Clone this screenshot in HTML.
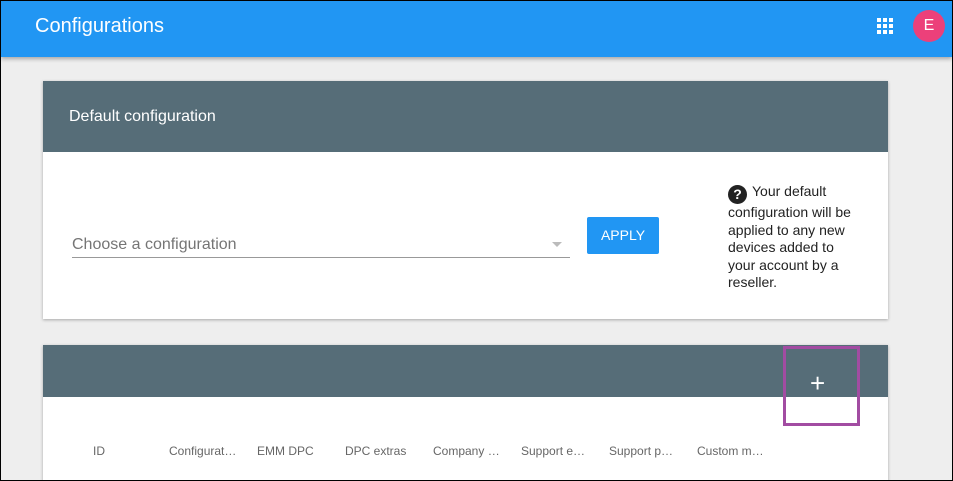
<!DOCTYPE html>
<html><head><style>
*{margin:0;padding:0;box-sizing:border-box}
body{width:953px;height:481px;overflow:hidden;background:#fff;font-family:"Liberation Sans",sans-serif}
#frame{position:absolute;left:0;top:0;width:953px;height:481px;border:1px solid #000;background:#eeeeee;overflow:hidden}
.top{position:absolute;left:0;top:0;width:951px;height:56px;background:#2196f3;box-shadow:0 2px 4px rgba(0,0,0,.3)}
.top h1{position:absolute;left:34px;top:14px;font-size:20px;font-weight:normal;color:#fff}
.grid{position:absolute;left:876px;top:17px;width:16px;height:16px}
.grid i{position:absolute;width:4px;height:4px;background:#fff}
.av{position:absolute;left:912px;top:9px;width:32px;height:32px;border-radius:50%;background:#ec407a;color:#fff;font-size:16px;text-align:center;line-height:32px}
.card{position:absolute;left:42px;width:845px;background:#fff;box-shadow:0 1px 3px rgba(0,0,0,.3)}
.hd{background:#566d78;color:#fff}
</style></head><body><div id="frame">
<div class="top"><h1>Configurations</h1>
<div class="grid">
<i style="left:0;top:0"></i><i style="left:6px;top:0"></i><i style="left:12px;top:0"></i>
<i style="left:0;top:6px"></i><i style="left:6px;top:6px"></i><i style="left:12px;top:6px"></i>
<i style="left:0;top:12px"></i><i style="left:6px;top:12px"></i><i style="left:12px;top:12px"></i>
</div>
<div class="av">E</div></div>

<div class="card" style="top:80px;height:238px">
<div class="hd" style="height:71px;padding:27px 0 0 26px;font-size:16px">Default configuration</div>
<div style="position:absolute;left:29px;top:155px;font-size:16px;color:#757575">Choose a configuration</div>
<div style="position:absolute;left:29px;top:176px;width:498px;height:1px;background:#999"></div>
<div style="position:absolute;left:509px;top:161px;width:0;height:0;border-left:5px solid transparent;border-right:5px solid transparent;border-top:5px solid #bbb"></div>
<div style="position:absolute;left:544px;top:136px;width:72px;height:37px;background:#2196f3;border-radius:2px;color:#fff;font-size:14px;text-align:center;line-height:37px">APPLY</div>
<div style="position:absolute;left:685px;top:102px;width:130px;font-size:14px;line-height:17.6px;color:#222"><span style="display:inline-block;width:19px;height:19px;border-radius:50%;background:#222;color:#fff;font-weight:bold;text-align:center;font-size:14px;line-height:19px;vertical-align:-3px;margin-right:5px">?</span>Your default configuration will be applied to any new devices added to your account by a reseller.</div>
</div>

<div class="card" style="top:344px;height:140px">
<div class="hd" style="height:52px;position:relative"><div style="position:absolute;left:767px;top:25px;font-size:26px;font-weight:300;line-height:1">+</div></div>
<div style="position:relative;font-size:12px;color:#666">
<span style="position:absolute;left:50px;top:47px">ID</span>
<span style="position:absolute;left:126px;top:47px">Configurat…</span>
<span style="position:absolute;left:214px;top:47px">EMM DPC</span>
<span style="position:absolute;left:302px;top:47px">DPC extras</span>
<span style="position:absolute;left:390px;top:47px">Company …</span>
<span style="position:absolute;left:478px;top:47px">Support e…</span>
<span style="position:absolute;left:566px;top:47px">Support p…</span>
<span style="position:absolute;left:654px;top:47px">Custom m…</span>
</div></div>
<div style="position:absolute;left:782px;top:345px;width:77px;height:80px;border:3px solid #a24ca2"></div>
</div></body></html>
